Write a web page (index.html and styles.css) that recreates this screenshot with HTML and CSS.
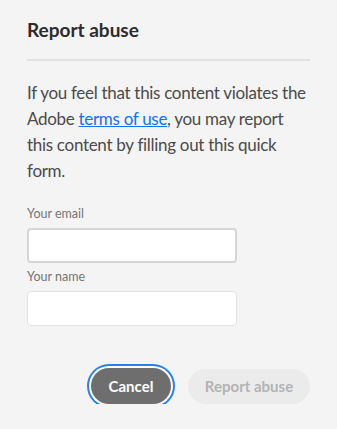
FILE: index.html
```html
<!DOCTYPE html>
<html>
<head>
<meta charset="utf-8">
<link rel="stylesheet" href="styles.css">
</head>
<body>
<div class="dialog">
  <h2 class="title">Report abuse</h2>
  <div class="divider"></div>
  <p class="text">If you feel that this content violates the Adobe <a class="link" href="#">terms of use</a>, you may report this content by filling out this quick form.</p>
  <div class="field">
    <label class="label">Your email</label>
    <div class="input input-email"></div>
  </div>
  <div class="field field-name">
    <label class="label">Your name</label>
    <div class="input input-name"></div>
  </div>
  <div class="actions">
    <button class="btn btn-cancel">Cancel</button>
    <button class="btn btn-submit">Report abuse</button>
  </div>
</div>
</body>
</html>
```

FILE: styles.css
```css
html, body {
  margin: 0;
  padding: 0;
  background: #f4f4f4;
}
body {
  font-family: Lato, "Open Sans", sans-serif;
  color: #4b4b4b;
}
.dialog {
  width: 283px;
  padding: 18px 27px 0 27px;
}
.title {
  margin: 0;
  font-size: 19px;
  line-height: 24px;
  font-weight: 700;
  color: #2c2c2c;
}
.divider {
  margin-top: 17px;
  height: 2px;
  background: #e1e1e1;
}
.text {
  margin: 19px 0 0 0;
  font-size: 17px;
  line-height: 26px;
  letter-spacing: -0.3px;
  color: #4b4b4b;
}
.link {
  color: #1473e6;
  text-decoration: underline;
}
.field {
  margin-top: 22px;
  display: flex;
  flex-direction: column;
}
.field-name {
  margin-top: 6px;
}
.label {
  font-size: 12.5px;
  line-height: 16px;
  color: #747474;
}
.input {
  margin-top: 6px;
  width: 210px;
  height: 35px;
  box-sizing: border-box;
  background: #fff;
  border-radius: 4px;
}
.input-email {
  border: 2px solid #d5d5d5;
}
.input-name {
  margin-top: 6px;
  border: 1px solid #e3e3e3;
}
.actions {
  margin-top: 42px;
  display: flex;
  justify-content: flex-end;
  align-items: center;
  gap: 17px;
}
.btn {
  font-family: inherit;
  font-size: 15px;
  font-weight: 700;
  border: none;
  padding: 0;
  border-radius: 18px;
  height: 36px;
}
.btn-cancel {
  width: 80px;
  background: #6e6e6e;
  color: #fff;
  box-shadow: 0 0 0 2px #fff, 0 0 0 4px #2680eb;
}
.btn-submit {
  width: 122px;
  height: 35px;
  background: #ebebeb;
  color: #b3b3b3;
}
```
